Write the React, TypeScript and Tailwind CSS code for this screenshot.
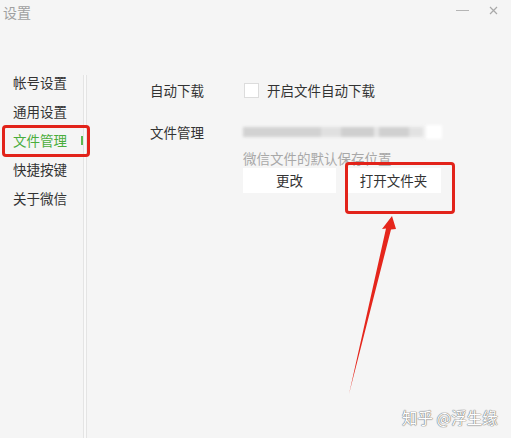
import React from 'react';

const font = { fontFamily: '"Noto Sans CJK SC", "Noto Sans", sans-serif' };

const navItems = ['帐号设置', '通用设置', '文件管理', '快捷按键', '关于微信'];

function WindowControls() {
  return (
    <div className="flex items-center gap-[20px] pr-[13px] pt-[6px]">
      <div className="h-[1px] w-[13px] bg-[#b5b5b5]" />
      <svg width="9" height="9" viewBox="0 0 9 9" className="text-[#a9a9a9]">
        <path d="M1 1 L8 8 M8 1 L1 8" stroke="currentColor" strokeWidth="1.2" />
      </svg>
    </div>
  );
}

function BlurredPath() {
  return (
    <div className="flex h-[12px] items-center blur-[1.5px]">
      <div className="h-[10px] w-[78px] bg-[#d2d2d2]" />
      <div className="h-[10px] w-[20px] bg-[#e0e0e0]" />
      <div className="h-[10px] w-[33px] bg-[#cfcfcf]" />
      <div className="h-[10px] w-[5px] bg-[#e6e6e6]" />
      <div className="h-[10px] w-[30px] bg-[#d0d0d0]" />
      <div className="h-[10px] w-[14px] bg-[#e2e2e2]" />
      <div className="h-[12px] w-[3px] bg-[#f1f1f1]" />
      <div className="h-[14px] w-[16px] bg-white" />
    </div>
  );
}

export default function App() {
  return (
    <div className="relative h-[438px] w-[511px] overflow-hidden bg-[#f5f5f5] text-[#333]" style={font}>
      {/* title bar */}
      <div className="flex h-[68px] items-start justify-between">
        <div className="pl-[3px] pt-[2px] text-[14px] leading-[20px] text-[#a0a0a0]">设置</div>
        <WindowControls />
      </div>

      <div className="flex h-[370px]">
        {/* sidebar */}
        <div className="flex w-[83px] flex-col">
          {navItems.map((item) => {
            const active = item === '文件管理';
            return (
              <div
                key={item}
                className={`flex h-[29px] items-center justify-between pl-[13px] text-[13.5px] ${
                  active ? 'text-[#4aad3c]' : 'text-[#333]'
                }`}
              >
                <span>{item}</span>
                {active && <span className="h-[9px] w-[2px] bg-[#5cb94f]" />}
              </div>
            );
          })}
        </div>

        {/* divider */}
        <div className="mt-[7px] w-[4px] border-x border-[#e4e4e4] bg-[#f9f9f9]" />

        {/* content */}
        <div className="flex-1 pl-[63px] pt-[12px] text-[13.5px]">
          <div className="grid grid-cols-[94px_1fr] items-center">
            <div className="leading-[20px]">自动下载</div>
            <label className="flex items-center gap-[8px] leading-[20px]">
              <span className="h-[15px] w-[15px] border border-[#dcdcdc] bg-white" />
              <span>开启文件自动下载</span>
            </label>
          </div>

          <div className="mt-[22px] grid grid-cols-[94px_1fr]">
            <div className="leading-[20px]">文件管理</div>
            <div className="-ml-[1px] pt-[4px]">
              <BlurredPath />
              <div className="mt-[11px] text-[13.5px] leading-[18px] text-[#a8a8a8]">微信文件的默认保存位置</div>
              <div className="mt-[1px] flex gap-[10px]">
                <button className="h-[25px] w-[93px] bg-white text-[13.5px] text-[#333]">更改</button>
                <button className="h-[25px] w-[95px] bg-white text-[13.5px] text-[#333]">打开文件夹</button>
              </div>
            </div>
          </div>
        </div>
      </div>

      {/* annotations */}
      <div className="absolute left-[2px] top-[125px] h-[32px] w-[88px] rounded-[4px] border-[3px] border-[#e2231a]" />
      <div className="absolute left-[345px] top-[162px] h-[52px] w-[110px] rounded-[4px] border-[3px] border-[#e2231a]" />
      <svg className="absolute left-0 top-0" width="511" height="438" viewBox="0 0 511 438">
        <polygon
          points="392,216 382,229 386,228.5 349,394 391,229.5 396,229"
          fill="#e5261c"
        />
      </svg>

      {/* watermark */}
      <div
        className="absolute left-[402px] top-[407px] text-[15.5px] leading-[20px] text-white"
        style={{ textShadow: '0 0 1px #777, 0 0 1px #777, 0 0 1px #888' }}
      >
        知乎 @浮生缘
      </div>
    </div>
  );
}
